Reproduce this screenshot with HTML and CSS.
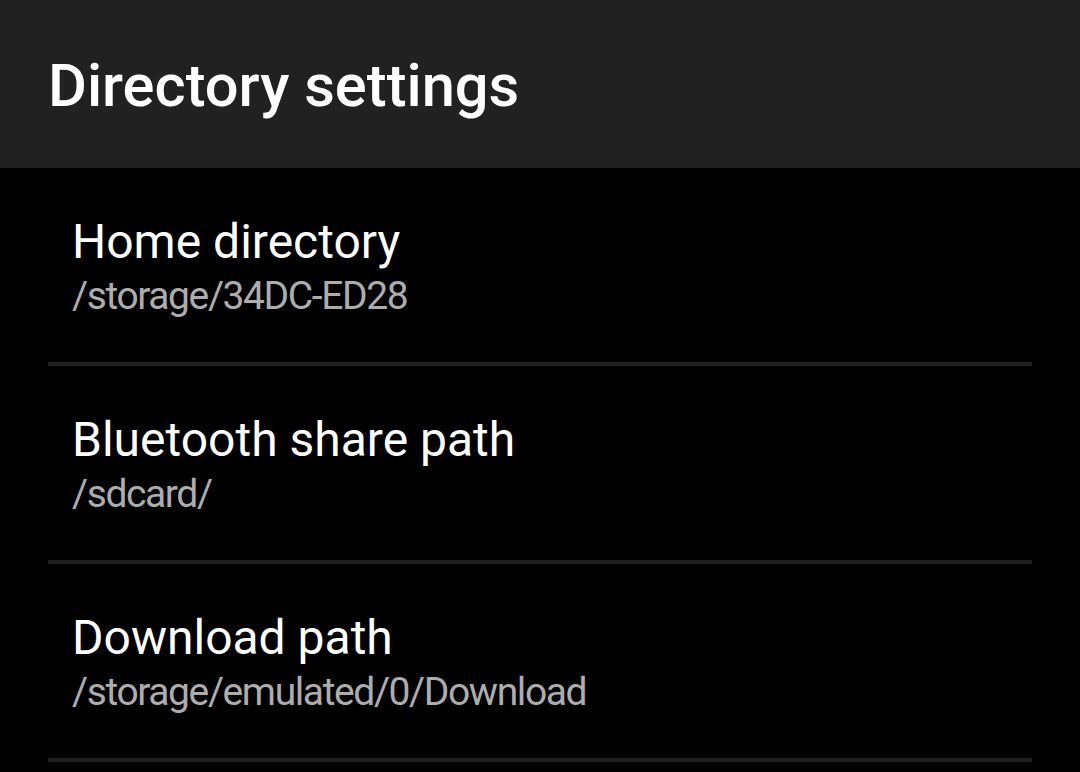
FILE: index.html
```html
<!DOCTYPE html>
<html lang="en">
  <head>
    <meta charset="UTF-8" />
    <meta name="viewport" content="width=device-width, initial-scale=1.0" />
    <title>Directory settings</title>
    <link rel="stylesheet" href="styles.css">
  </head>
  <body>
    <div class="toolbar">
      <h1>Directory settings</h1>
    </div>

    <div class="pref-list">
      <div class="pref-item">
        <div class="pref-title">Home directory</div>
        <div class="pref-summary">/storage/34DC-ED28</div>
      </div>
      <div class="pref-item">
        <div class="pref-title">Bluetooth share path</div>
        <div class="pref-summary">/sdcard/</div>
      </div>
      <div class="pref-item">
        <div class="pref-title">Download path</div>
        <div class="pref-summary">/storage/emulated/0/Download</div>
      </div>
    </div>
  </body>
</html>
```

FILE: styles.css
```css
body {
  margin: 0;
  background-color: #000;
  font-family: Roboto, "Noto Sans", sans-serif;
  color: #fff;
}

.toolbar {
  height: 168px;
  box-sizing: border-box;
  padding: 4px 48px 0;
  display: flex;
  align-items: center;
  background-color: #212121;
}

.toolbar h1 {
  margin: 0;
  font-size: 59.6px;
  font-weight: 500;
  color: #fff;
}

.pref-list {
  display: flex;
  flex-direction: column;
}

.pref-item {
  margin: 0 48px;
  padding: 46px 24px 42px;
  border-bottom: 4px solid #1f1f1f;
}

.pref-title {
  font-size: 48px;
  line-height: 56px;
  margin-bottom: 2px;
  color: #fff;
}

.pref-summary {
  font-size: 39px;
  line-height: 48px;
  letter-spacing: -1.4px;
  color: #adadad;
}
```
